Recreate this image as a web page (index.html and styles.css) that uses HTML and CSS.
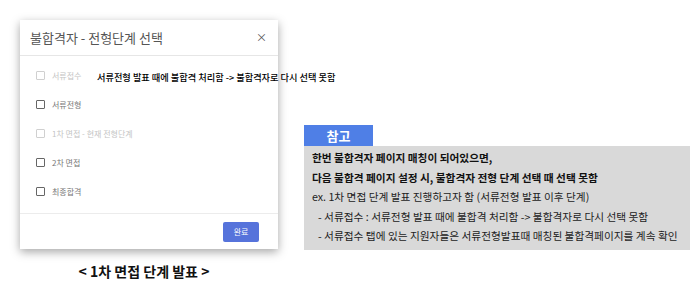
FILE: index.html
```html
<!DOCTYPE html>
<html>
<head>
  <link rel="stylesheet" href="styles.css">
</head>
<body>
  <div class="page">
    <div class="shot">
      <div class="modal">
        <div class="modal__head">
          <h1 class="modal__title">불합격자 - 전형단계 선택</h1>
          <span class="modal__close">&times;</span>
        </div>

        <ul class="modal__list">
          <li class="step step--off"><span class="step__box"></span>서류접수</li>
          <li class="step"><span class="step__box"></span>서류전형</li>
          <li class="step step--off"><span class="step__box"></span>1차 면접 - 현재 전형단계</li>
          <li class="step"><span class="step__box"></span>2차 면접</li>
          <li class="step"><span class="step__box"></span>최종합격</li>
        </ul>

        <div class="modal__foot">
          <button class="modal__done" type="button">완료</button>
        </div>

        <p class="memo">서류전형 발표 때에 불합격 처리함 -&gt; 불합격자로 다시 선택 못함</p>
      </div>

      <p class="caption">&lt; 1차 면접 단계 발표 &gt;</p>
    </div>

    <div class="note">
      <div class="note__tag">참고</div>
      <div class="note__body">
        <p class="note__line note__line--bold">한번 불합격자 페이지 매칭이 되어있으면,</p>
        <p class="note__line note__line--bold">다음 불합격 페이지 설정 시, 불합격자 전형 단계 선택 때 선택 못함</p>
        <p class="note__line">ex. 1차 면접 단계 발표 진행하고자 함 (서류전형 발표 이후 단계)</p>
        <p class="note__line note__line--sub">- 서류접수 : 서류전형 발표 때에 불합격 처리함 -&gt; 불합격자로 다시 선택 못함</p>
        <p class="note__line note__line--sub">- 서류접수 탭에 있는 지원자들은 서류전형발표때 매칭된 불합격페이지를 계속 확인</p>
      </div>
    </div>
  </div>
</body>
</html>
```

FILE: styles.css
```css
body {
  margin: 0;
  background: #fff;
  font-family: "Noto Sans CJK KR", "Noto Sans", sans-serif;
}

p,
h1,
ul {
  margin: 0;
  padding: 0;
}

.page {
  display: flex;
  gap: 26px;
  padding: 20px 0 0 20px;
}

.shot {
  display: flex;
  flex-direction: column;
  align-items: center;
  width: 258px;
}

.modal {
  position: relative;
  display: flex;
  flex-direction: column;
  width: 258px;
  height: 229px;
  background: #fff;
  box-shadow: 0 3px 9px rgba(0, 0, 0, 0.35);
}

.modal__head {
  display: flex;
  align-items: center;
  justify-content: space-between;
  height: 35px;
  padding: 0 11px 0 10px;
  border-bottom: 1px solid #e6e6e6;
}

.modal__title {
  font-size: 13px;
  font-weight: 400;
  color: #555;
}

.modal__close {
  font-size: 11px;
  color: #555;
  line-height: 1;
}

.modal__list {
  flex: 1;
  padding: 5px 0 0 16px;
  list-style: none;
}

.step {
  display: flex;
  align-items: center;
  gap: 7px;
  height: 29px;
  font-size: 8px;
  color: #777;
}

.step__box {
  box-sizing: border-box;
  width: 9px;
  height: 9px;
  border: 1.5px solid #666;
  border-radius: 1px;
}

.step--off {
  color: #c4c4c4;
}

.step--off .step__box {
  border-color: #d0d0d0;
}

.modal__foot {
  display: flex;
  justify-content: flex-end;
  align-items: center;
  height: 35px;
  padding-right: 19px;
  border-top: 1px solid #ececec;
}

.modal__done {
  width: 36px;
  height: 20px;
  padding: 0;
  border: 0;
  border-radius: 2px;
  background: #5673db;
  color: #fff;
  font-family: inherit;
  font-size: 8px;
}

.memo {
  position: absolute;
  top: 50px;
  left: 77px;
  white-space: nowrap;
  font-size: 9.2px;
  font-weight: 500;
  color: #000;
}

.caption {
  margin: 12px 10px 0 0;
  font-size: 14px;
  font-weight: 700;
  color: #111;
}

.note {
  width: 386px;
  margin-top: 105px;
}

.note__tag {
  width: 69px;
  height: 21px;
  background: #4f7fe6;
  color: #fff;
  font-size: 13px;
  font-weight: 700;
  line-height: 21px;
  text-align: center;
}

.note__body {
  height: 102px;
  padding: 2px 8px 0;
  background: #d9d9d9;
}

.note__line {
  font-size: 10.7px;
  line-height: 19.6px;
  color: #222;
  white-space: nowrap;
}

.note__line--bold {
  font-weight: 700;
  color: #111;
}

.note__line--sub {
  padding-left: 6px;
}
```
